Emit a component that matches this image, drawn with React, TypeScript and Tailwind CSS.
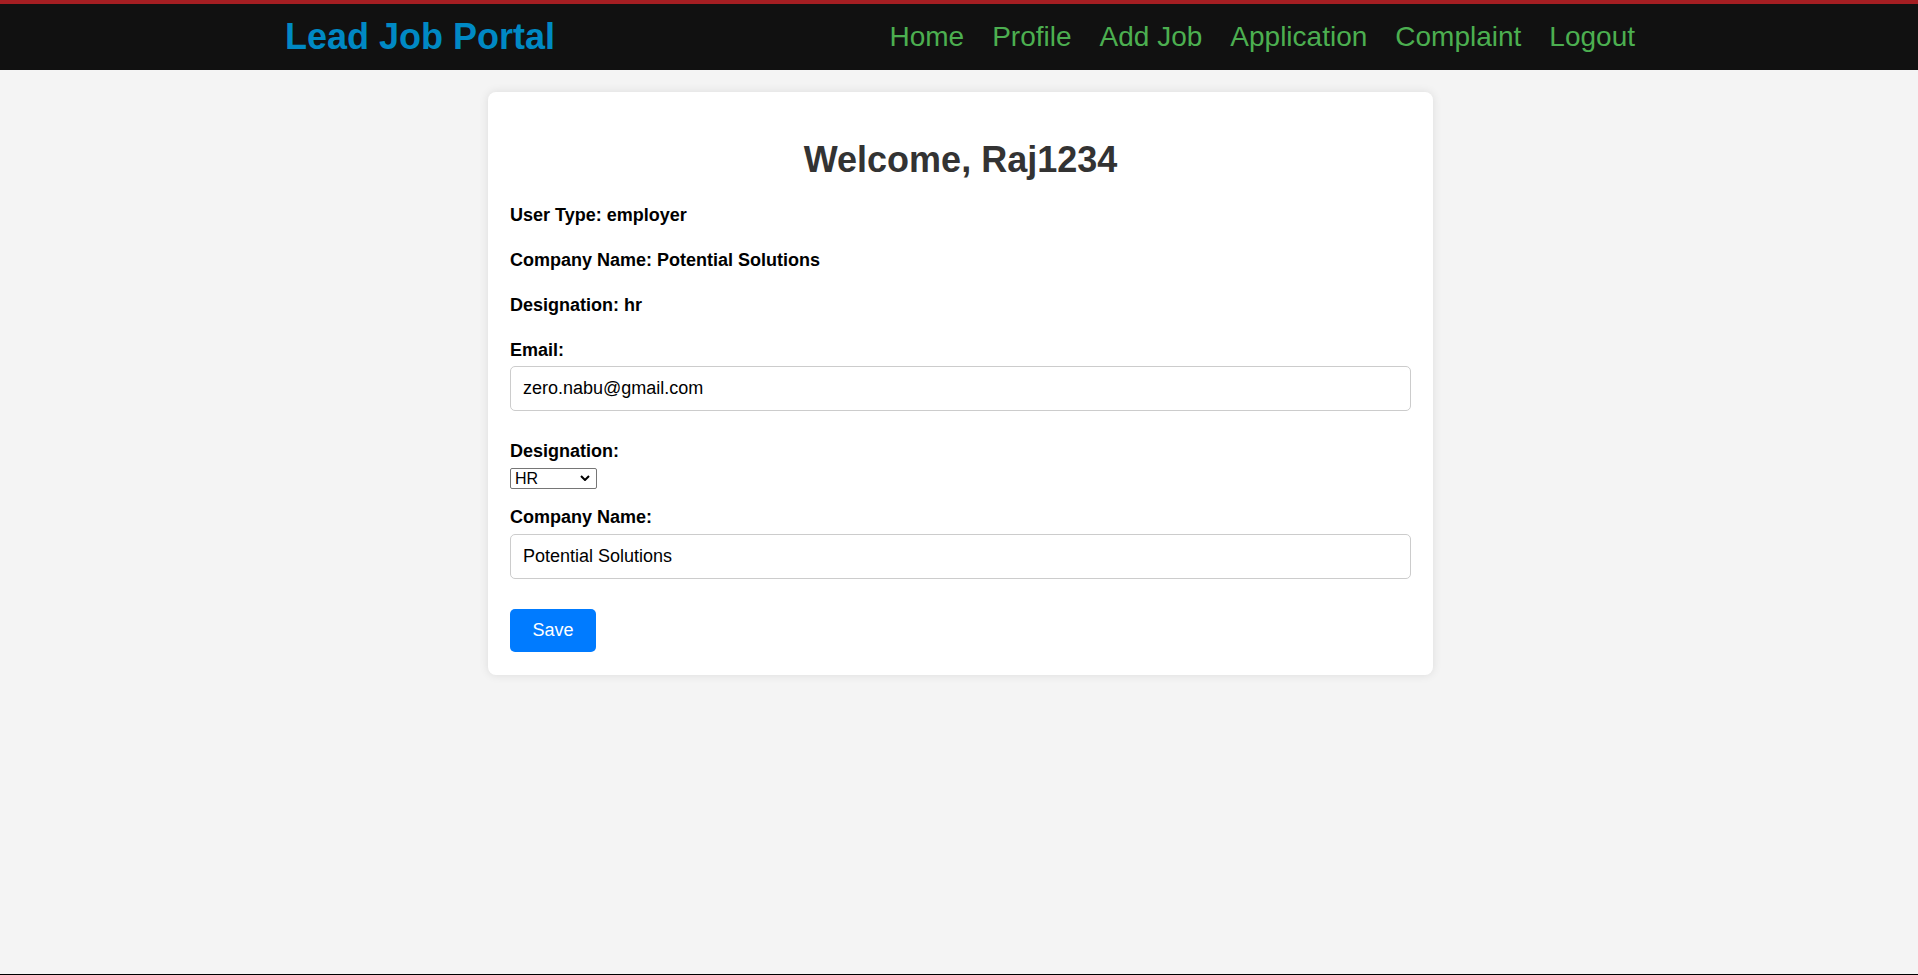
const navLinks = ['Home', 'Profile', 'Add Job', 'Application', 'Complaint', 'Logout']

function Navbar() {
  return (
    <nav className="h-[70px] border-t-4 border-[#a51e22] bg-[#111111]">
      <div className="mx-auto flex h-full w-[1352px] items-center justify-between">
        <h1 className="pl-[2px] text-[36px] font-bold text-[#0089c4]">Lead Job Portal</h1>
        <ul className="flex items-center gap-7">
          {navLinks.map((link) => (
            <li key={link}>
              <a href="#" className="text-[28px] text-[#4caf50]">
                {link}
              </a>
            </li>
          ))}
        </ul>
      </div>
    </nav>
  )
}

function ProfileCard() {
  return (
    <section className="mx-auto w-[945px] rounded-lg bg-white px-[22px] pt-[47px] pb-[23px] shadow-[0_0_10px_rgba(0,0,0,0.1)]">
      <h2 className="text-center text-[36px] leading-[41px] font-bold text-[#333333]">Welcome, Raj1234</h2>

      {/* Read-only details */}
      <p className="mt-[25px] text-[18px] leading-[20px] font-bold text-black">User Type: employer</p>
      <p className="mt-[25px] text-[18px] leading-[20px] font-bold text-black">Company Name: Potential Solutions</p>
      <p className="mt-[25px] text-[18px] leading-[20px] font-bold text-black">Designation: hr</p>

      {/* Editable form */}
      <form onSubmit={(e) => e.preventDefault()}>
        <label className="mt-[25px] block text-[18px] leading-[20px] font-bold text-black">Email:</label>
        <input
          type="email"
          defaultValue="zero.nabu@gmail.com"
          className="mt-[5.5px] block h-[45.5px] w-full rounded-[5px] border border-[#cccccc] px-3 text-[18px] text-black"
        />

        <label className="mt-[30px] block text-[18px] leading-[20px] font-bold text-black">Designation:</label>
        <div className="relative mt-[7px] w-[87px]">
          <select
            defaultValue="hr"
            className="block h-[21px] w-full appearance-none rounded-[2px] border border-[#767676] bg-white pl-[4px] text-[16px] leading-none text-black"
          >
            <option value="hr">HR</option>
            <option value="manager">Manager</option>
            <option value="recruiter">Recruiter</option>
          </select>
          <svg
            className="pointer-events-none absolute top-[7px] right-[7px] h-[6px] w-[10px]"
            viewBox="0 0 10 6"
            fill="none"
            stroke="#000"
            strokeWidth={2}
          >
            <path d="M1 1l4 4 4-4" />
          </svg>
        </div>

        <label className="mt-[18px] block text-[18px] leading-[20px] font-bold text-black">Company Name:</label>
        <input
          type="text"
          defaultValue="Potential Solutions"
          className="mt-[6.5px] block h-[45.5px] w-full rounded-[5px] border border-[#cccccc] px-3 text-[18px] text-black"
        />

        <button
          type="submit"
          className="mt-[30px] block h-[43px] w-[86px] rounded-[5px] bg-[#007bff] text-[18px] text-white"
        >
          Save
        </button>
      </form>
    </section>
  )
}

export default function App() {
  return (
    <div className="flex min-h-[975px] flex-col bg-[#f4f4f4] font-['Liberation_Sans',Arial,sans-serif]">
      <Navbar />
      <main className="flex-1 pt-[22px] pl-[3px]">
        <ProfileCard />
      </main>
      <div className="h-px bg-black" />
    </div>
  )
}
